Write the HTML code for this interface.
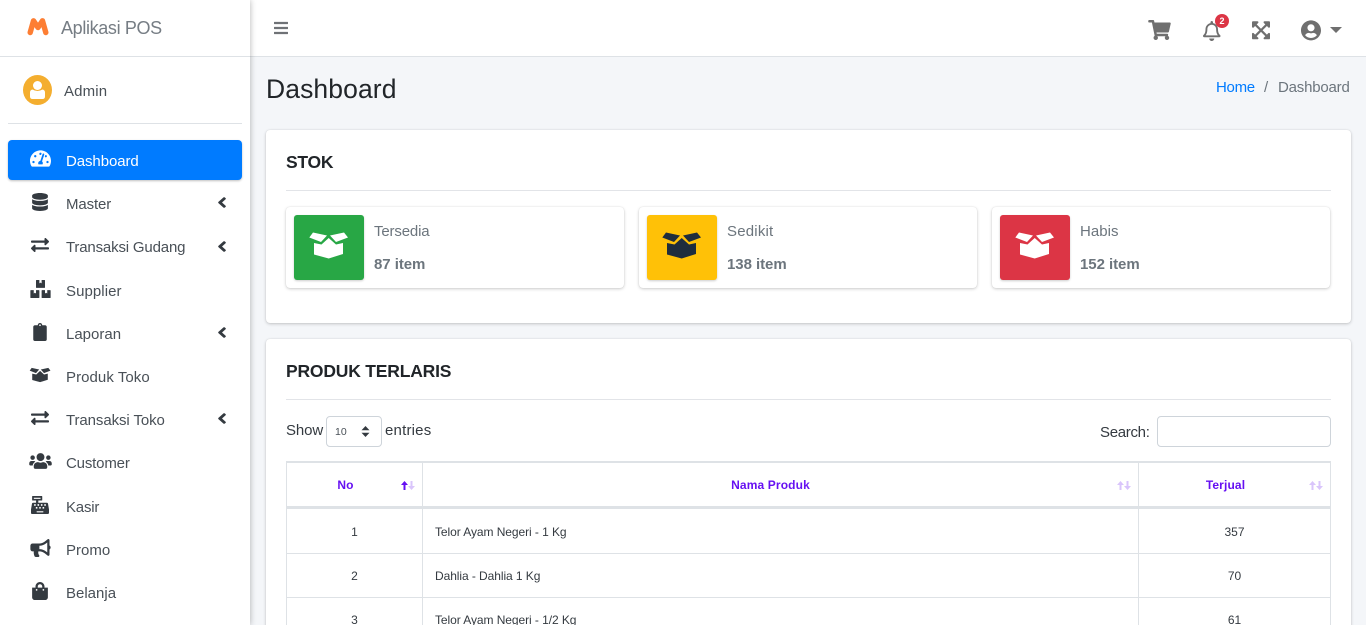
<!DOCTYPE html>
<html lang="id">
<head>
<meta charset="utf-8">
<title>Aplikasi POS</title>
<style>
*{box-sizing:border-box}
html,body{margin:0;padding:0;width:1366px;height:625px;overflow:hidden;background:#f4f6f9;font-family:"Liberation Sans",sans-serif;color:#212529}
#root{position:relative;width:1366px;height:625px;overflow:hidden;background:#f4f6f9}
.a{position:absolute}
.t{position:absolute;white-space:nowrap;line-height:20px;height:20px}
svg{position:absolute;display:block;fill:currentColor}
#side{left:0;top:0;width:250px;height:625px;background:#fff;box-shadow:0 0 6px rgba(0,0,0,.3);z-index:3}
#nav{left:250px;top:0;width:1116px;height:57px;background:#fff;border-bottom:1px solid #dee2e6}
.m{font-size:15px;color:#495057;left:66px}
.ic{color:#343a40}
.card{left:266px;width:1085px;background:#fff;border-radius:4px;box-shadow:0 0 1px rgba(0,0,0,.125),0 1px 3px rgba(0,0,0,.2)}
.h{font-size:17.5px;font-weight:700;color:#212529;left:286px}
.hr{height:1px;background:#e2e4e8}
.box{top:207px;width:338px;height:80.5px;background:#fff;border-radius:4px;box-shadow:0 0 1px rgba(0,0,0,.125),0 1px 3px rgba(0,0,0,.2)}
.bi{top:215px;width:70px;height:64.5px;border-radius:3px;box-shadow:0 1px 2px rgba(0,0,0,.2)}
.l1{font-size:15px;color:#6c757d;top:222px}
.l2{font-size:15px;font-weight:700;color:#6c757d;top:255px;letter-spacing:-.05px}
table{position:absolute;left:286px;top:461px;width:1045px;border-collapse:separate;border-spacing:0;table-layout:fixed;font-size:12px;color:#343a40;letter-spacing:-.07px}
th{height:48px;border-right:1px solid #dee2e6;border-top:2px solid #dee2e6;border-bottom:3px solid #dee2e6;color:#6610f2;font-size:12px;font-weight:700;text-align:center;letter-spacing:.13px;padding:1px 0 0}
td{border-right:1px solid #dee2e6;border-bottom:1px solid #dee2e6;padding:1px 12px 0;vertical-align:middle}
th:first-child,td:first-child{border-left:1px solid #dee2e6}
.c{text-align:center;letter-spacing:0}
.inp{background:#fff;border:1px solid #ced4da;border-radius:4px}
</style>
</head>
<body>
<div id="root">

<div id="nav" class="a"></div>

<div class="a card" style="top:130px;height:193px"></div>
<div class="a card" style="top:339px;height:300px"></div>

<!-- Navbar icons -->
<svg style="left:274px;top:20px;color:#6f7276" width="14" height="16" viewBox="0 0 448 512"><path d="M16 132h416c8.837 0 16-7.163 16-16V76c0-8.837-7.163-16-16-16H16C7.163 60 0 67.163 0 76v40c0 8.837 7.163 16 16 16zm0 160h416c8.837 0 16-7.163 16-16v-40c0-8.837-7.163-16-16-16H16c-8.837 0-16 7.163-16 16v40c0 8.837 7.163 16 16 16zm0 160h416c8.837 0 16-7.163 16-16v-40c0-8.837-7.163-16-16-16H16c-8.837 0-16 7.163-16 16v40c0 8.837 7.163 16 16 16z"/></svg>
<svg style="left:1148px;top:20px;color:#6f6f6f" width="23" height="20" viewBox="0 0 576 512"><path d="M528.12 301.319l47.273-208C578.806 78.301 567.391 64 551.99 64H159.208l-9.166-44.81C147.758 8.021 137.93 0 126.529 0H24C10.745 0 0 10.745 0 24v16c0 13.255 10.745 24 24 24h69.883l70.248 343.435C147.325 417.1 136 435.222 136 456c0 30.928 25.072 56 56 56s56-25.072 56-56c0-15.674-6.447-29.835-16.824-40h209.647C430.447 426.165 424 440.326 424 456c0 30.928 25.072 56 56 56s56-25.072 56-56c0-22.172-12.888-41.332-31.579-50.405l5.517-24.276c3.413-15.018-8.002-29.319-23.403-29.319H218.117l-6.545-32h293.145c11.206 0 20.92-7.754 23.403-18.681z"/></svg>
<svg style="left:1203px;top:21px;color:#6f6f6f" width="17.5" height="20" viewBox="0 0 448 512"><path d="M439.39 362.29c-19.32-20.76-55.47-51.99-55.47-154.29 0-77.7-54.48-139.9-127.94-155.16V32c0-17.67-14.32-32-31.98-32s-31.98 14.33-31.98 32v20.84C118.56 68.1 64.08 130.3 64.08 208c0 102.3-36.15 133.53-55.47 154.29-6 6.45-8.66 14.16-8.61 21.71.11 16.4 12.98 32 32.1 32h383.8c19.12 0 32-15.6 32.1-32 .05-7.55-2.61-15.27-8.61-21.71zM67.53 368c21.22-27.97 44.42-74.33 44.53-159.42 0-.2-.06-.38-.06-.58 0-61.86 50.14-112 112-112s112 50.14 112 112c0 .2-.06.38-.06.58.11 85.1 23.31 131.46 44.53 159.42H67.53zM224 512c35.32 0 63.97-28.65 63.97-64H160.03c0 35.35 28.65 64 63.97 64z"/></svg>
<div class="a" style="left:1215px;top:14px;width:14px;height:14px;border-radius:50%;background:#dc3545;color:#fff;font-size:9px;font-weight:700;line-height:14px;text-align:center">2</div>
<svg style="left:1252px;top:20px;color:#6f6f6f" width="18" height="20.6" viewBox="0 0 448 512"><path d="M448 344v112a23.94 23.94 0 0 1-24 24H312c-21.39 0-32.09-25.9-17-41l36.2-36.2L224 295.6 116.77 402.9 153 439c15.09 15.1 4.39 41-17 41H24a23.94 23.94 0 0 1-24-24V344c0-21.4 25.89-32.1 41-17l36.19 36.2L184.46 256 77.18 148.7 41 185c-15.1 15.1-41 4.4-41-17V56a23.94 23.94 0 0 1 24-24h112c21.39 0 32.09 25.9 17 41l-36.2 36.2L224 216.4l107.23-107.3L295 73c-15.09-15.1-4.39-41 17-41h112a23.94 23.94 0 0 1 24 24v112c0 21.4-25.89 32.1-41 17l-36.19-36.2L263.54 256l107.28 107.3L407 327.1c15.1-15.2 41-4.5 41 16.9z"/></svg>
<svg style="left:1301px;top:20px;color:#6f6f6f" width="20" height="20.65" viewBox="0 0 496 512"><path d="M248 8C111 8 0 119 0 256s111 248 248 248 248-111 248-248S385 8 248 8zm0 96c48.6 0 88 39.4 88 88s-39.4 88-88 88-88-39.4-88-88 39.4-88 88-88zm0 344c-58.7 0-111.3-26.6-146.5-68.2 18.8-35.4 55.6-59.8 98.5-59.8 2.4 0 4.8.4 7.1 1.1 13 4.2 26.6 6.9 40.9 6.9 14.3 0 28-2.7 40.9-6.9 2.3-.7 4.7-1.1 7.1-1.1 42.9 0 79.7 24.4 98.5 59.8C359.3 421.4 306.7 448 248 448z"/></svg>
<svg style="left:1330px;top:27px;color:#6f6f6f" width="12" height="6" viewBox="0 0 12 6"><path d="M0 0h12L6 6z"/></svg>

<!-- Header -->
<div class="t" style="left:266px;top:79px;font-size:26.5px;color:#212529;letter-spacing:.1px">Dashboard</div>
<div class="t" style="left:1216px;top:78px;font-size:15px;color:#007bff;letter-spacing:-.3px">Home</div>
<div class="t" style="left:1264px;top:78px;font-size:15px;color:#6c757d">/</div>
<div class="t" style="left:1278px;top:78px;font-size:15px;color:#6c757d;letter-spacing:-.2px">Dashboard</div>

<!-- STOK -->
<div class="t h" style="top:152px;letter-spacing:-.25px">STOK</div>
<div class="a hr" style="left:286px;top:190px;width:1045px"></div>

<div class="a box" style="left:286px"></div>
<div class="a bi" style="left:294px;background:#28a745"></div>
<svg style="left:304px;top:226px;color:#fff" width="50" height="40" viewBox="0 0 50 40"><path d="M5.300 11.500L9 6.500 23 9.500 17 16zM44 11.500L40 6.500 26 9.500 32 16zM10 17l7.500 1.500L24.700 12 32 18.500 39 17V28L24.700 32.500 10 28.500z"/></svg>
<div class="t l1" style="left:374px;letter-spacing:-.15px">Tersedia</div>
<div class="t l2" style="left:374px">87 item</div>

<div class="a box" style="left:639px"></div>
<div class="a bi" style="left:647px;background:#ffc107"></div>
<svg style="left:657px;top:226px;color:#1f2d3d" width="50" height="40" viewBox="0 0 50 40"><path d="M5.300 11.500L9 6.500 23 9.500 17 16zM44 11.500L40 6.500 26 9.500 32 16zM10 17l7.500 1.500L24.700 12 32 18.500 39 17V28L24.700 32.500 10 28.500z"/></svg>
<div class="t l1" style="left:727px;letter-spacing:.2px">Sedikit</div>
<div class="t l2" style="left:727px">138 item</div>

<div class="a box" style="left:992px"></div>
<div class="a bi" style="left:1000px;background:#dc3545"></div>
<svg style="left:1010px;top:226px;color:#fff" width="50" height="40" viewBox="0 0 50 40"><path d="M5.300 11.500L9 6.500 23 9.500 17 16zM44 11.500L40 6.500 26 9.500 32 16zM10 17l7.500 1.500L24.700 12 32 18.500 39 17V28L24.700 32.500 10 28.500z"/></svg>
<div class="t l1" style="left:1080px;letter-spacing:.05px">Habis</div>
<div class="t l2" style="left:1080px">152 item</div>

<!-- PRODUK TERLARIS -->
<div class="t h" style="top:361px;letter-spacing:-.2px">PRODUK TERLARIS</div>
<div class="a hr" style="left:286px;top:399px;width:1045px"></div>

<div class="t" style="left:286px;top:421px;font-size:15px;letter-spacing:-.1px;color:#343a40">Show</div>
<div class="a inp" style="left:326px;top:416px;width:56px;height:31px"></div>
<div class="t" style="left:335px;top:422px;font-size:10.5px;color:#495057">10</div>
<svg style="left:361px;top:426px;color:#343a40" width="9" height="11" viewBox="0 0 9 11"><path d="M4.500 0L8.500 4.200H.5zM4.500 11L.5 6.800h8z"/></svg>
<div class="t" style="left:385px;top:421px;font-size:15px;letter-spacing:.2px;color:#343a40">entries</div>
<div class="t" style="left:1100px;top:423px;font-size:15px;letter-spacing:-.3px;color:#343a40">Search:</div>
<div class="a inp" style="left:1157px;top:416px;width:174px;height:31px"></div>

<table>
<colgroup><col style="width:137px"><col style="width:716px"><col style="width:192px"></colgroup>
<thead><tr><th style="padding-right:18px">No</th><th style="padding-right:20px">Nama Produk</th><th style="padding-right:18px">Terjual</th></tr></thead>
<tbody>
<tr><td class="c" style="height:45px">1</td><td style="height:45px">Telor Ayam Negeri - 1 Kg</td><td class="c" style="height:45px">357</td></tr>
<tr><td class="c" style="height:44px">2</td><td style="height:44px">Dahlia - Dahlia 1 Kg</td><td class="c" style="height:44px">70</td></tr>
<tr><td class="c" style="height:44px">3</td><td style="height:44px">Telor Ayam Negeri - 1/2 Kg</td><td class="c" style="height:44px">61</td></tr>
</tbody>
</table>

<!-- Sort arrows -->
<svg style="left:401px;top:481px;color:#6610f2" width="7" height="9" viewBox="0 0 7 9"><path d="M3.500 0L7 4H4.500v5h-2V4H0z"/></svg>
<svg style="left:408px;top:481px;color:#d9c5fb" width="7" height="9" viewBox="0 0 7 9"><path d="M3.500 9L0 5h2.500V0h2v5H7z"/></svg>
<svg style="left:1117px;top:481px;color:#d9c5fb" width="7" height="9" viewBox="0 0 7 9"><path d="M3.500 0L7 4H4.500v5h-2V4H0z"/></svg>
<svg style="left:1123.5px;top:481px;color:#d9c5fb" width="7" height="9" viewBox="0 0 7 9"><path d="M3.500 9L0 5h2.500V0h2v5H7z"/></svg>
<svg style="left:1309px;top:481px;color:#d9c5fb" width="7" height="9" viewBox="0 0 7 9"><path d="M3.500 0L7 4H4.500v5h-2V4H0z"/></svg>
<svg style="left:1315.5px;top:481px;color:#d9c5fb" width="7" height="9" viewBox="0 0 7 9"><path d="M3.500 9L0 5h2.500V0h2v5H7z"/></svg>

<!-- Sidebar -->
<aside id="side" class="a">
  <svg style="left:27px;top:17px;fill:none" width="22" height="19" viewBox="0 0 22 19"><path d="M3.200 15.500L6.500 3.800 11 10.500 15.500 3.800 18.800 15.500" stroke="#fd7e33" stroke-width="5.400" stroke-linecap="round" stroke-linejoin="round" fill="none"/></svg>
  <div class="t" style="left:61px;top:18px;font-size:18px;color:#767d84;letter-spacing:-.35px">Aplikasi POS</div>
  <div class="a hr" style="left:0;top:56px;width:250px;background:#dee2e6"></div>

  <div class="a" style="left:23px;top:75px;width:29px;height:30px;border-radius:50%;background:#f4ae2f"></div>
  <svg style="left:30px;top:81px;color:#fff" width="15" height="18" viewBox="0 0 15 18"><circle cx="7.500" cy="4.500" r="4.500"/><path d="M2.500 8.500Q7.500 11.500 12.500 8.500Q15 9 15 11.500V15.500Q15 18 12.500 18H2.500Q0 18 0 15.500V11.500Q0 9 2.500 8.500z"/></svg>
  <div class="t" style="left:64px;top:82px;font-size:15px;color:#495057;letter-spacing:.15px">Admin</div>
  <div class="a hr" style="left:8px;top:123px;width:234px;background:#dee2e6"></div>

  <div class="a" style="left:8px;top:140px;width:234px;height:40px;border-radius:4px;background:#007bff;box-shadow:0 1px 2px rgba(0,0,0,.25)"></div>
  <svg style="left:30px;top:148px;color:#fff" width="21" height="21" viewBox="0 0 576 512"><path d="M288 32C128.940 32 0 160.940 0 320c0 52.800 14.250 102.260 39.060 144.800 5.610 9.620 16.300 15.200 27.440 15.200h443c11.140 0 21.830-5.580 27.440-15.200C561.750 422.260 576 372.800 576 320c0-159.060-128.940-288-288-288zm0 64c14.710 0 26.580 10.130 30.320 23.650-1.110 2.260-2.640 4.230-3.450 6.670l-9.220 27.670c-5.130 3.490-10.970 6.010-17.640 6.010-17.670 0-32-14.330-32-32S270.330 96 288 96zM96 384c-17.670 0-32-14.330-32-32s14.330-32 32-32 32 14.330 32 32-14.330 32-32 32zm48-160c-17.670 0-32-14.330-32-32s14.330-32 32-32 32 14.330 32 32-14.330 32-32 32zm246.770-72.410l-61.330 184C343.130 347.330 352 364.540 352 384c0 11.720-3.380 22.550-8.880 32H232.880c-5.500-9.450-8.880-20.280-8.880-32 0-33.940 26.500-61.430 59.900-63.590l61.340-184.010c4.170-12.560 17.730-19.450 30.360-15.170 12.570 4.190 19.350 17.790 15.170 30.360zm14.660 57.200l15.520-46.550c3.470-1.290 7.130-2.230 11.050-2.230 17.670 0 32 14.330 32 32s-14.330 32-32 32c-11.380-.010-20.890-6.280-26.570-15.220zM480 384c-17.670 0-32-14.330-32-32s14.330-32 32-32 32 14.330 32 32-14.330 32-32 32z"/></svg>
  <div class="t m" style="top:152px;color:#fff;letter-spacing:-.08px">Dashboard</div>

  <svg class="ic" style="left:32px;top:193px" width="16" height="18" viewBox="0 0 448 512"><path d="M448 73.143v45.714C448 159.143 347.667 192 224 192S0 159.143 0 118.857V73.143C0 32.857 100.333 0 224 0s224 32.857 224 73.143zM448 176v102.857C448 319.143 347.667 352 224 352S0 319.143 0 278.857V176c48.125 33.143 136.208 48.572 224 48.572S399.874 209.143 448 176zm0 160v102.857C448 479.143 347.667 512 224 512S0 479.143 0 438.857V336c48.125 33.143 136.208 48.572 224 48.572S399.874 369.143 448 336z"/></svg>
  <div class="t m" style="top:195px;letter-spacing:-.13px">Master</div>
  <svg class="ic" style="left:218px;top:197px" width="8" height="11" viewBox="20 90 215 332" preserveAspectRatio="none"><path d="M31.700 239l136-136c9.400-9.400 24.600-9.400 33.900 0l22.600 22.600c9.400 9.400 9.400 24.600 0 33.900L127.900 256l96.400 96.400c9.400 9.400 9.400 24.600 0 33.900L201.700 409c-9.400 9.400-24.600 9.400-33.900 0l-136-136c-9.500-9.400-9.500-24.600-.1-34z"/></svg>

  <svg class="ic" style="left:31px;top:236px" width="18" height="18" viewBox="0 0 512 512"><path d="M0 168v-16c0-13.255 10.745-24 24-24h360V80c0-21.367 25.899-32.042 40.971-16.971l80 80c9.372 9.373 9.372 24.569 0 33.941l-80 80C409.956 271.982 384 261.456 384 240v-48H24c-13.255 0-24-10.745-24-24zm488 152H128v-48c0-21.314-25.862-32.080-40.971-16.971l-80 80c-9.372 9.373-9.372 24.569 0 33.941l80 80C102.057 463.997 128 453.437 128 432v-48h360c13.255 0 24-10.745 24-24v-16c0-13.255-10.745-24-24-24z"/></svg>
  <div class="t m" style="top:238px;letter-spacing:-.17px">Transaksi Gudang</div>
  <svg class="ic" style="left:218px;top:240.500px" width="8" height="11" viewBox="20 90 215 332" preserveAspectRatio="none"><path d="M31.700 239l136-136c9.400-9.400 24.600-9.400 33.900 0l22.600 22.600c9.400 9.400 9.400 24.600 0 33.900L127.900 256l96.400 96.400c9.400 9.400 9.400 24.600 0 33.900L201.700 409c-9.400 9.400-24.600 9.400-33.900 0l-136-136c-9.500-9.400-9.500-24.600-.1-34z"/></svg>

  <svg class="ic" style="left:30px;top:280px" width="21" height="18" viewBox="0 0 576 512"><path d="M560 288h-80v96l-32-21.300-32 21.300v-96h-80c-8.800 0-16 7.200-16 16v192c0 8.800 7.200 16 16 16h224c8.800 0 16-7.200 16-16V304c0-8.800-7.200-16-16-16zm-384-64h224c8.800 0 16-7.200 16-16V16c0-8.800-7.200-16-16-16h-80v96l-32-21.300L256 96V0h-80c-8.800 0-16 7.200-16 16v192c0 8.800 7.200 16 16 16zm64 64h-80v96l-32-21.300L96 384v-96H16c-8.800 0-16 7.200-16 16v192c0 8.800 7.200 16 16 16h224c8.800 0 16-7.200 16-16V304c0-8.800-7.200-16-16-16z"/></svg>
  <div class="t m" style="top:282px;letter-spacing:.07px">Supplier</div>

  <svg class="ic" style="left:33px;top:323px" width="14" height="18" viewBox="0 0 384 512"><path d="M384 112v352c0 26.510-21.490 48-48 48H48c-26.510 0-48-21.490-48-48V112c0-26.510 21.490-48 48-48h80c0-35.290 28.710-64 64-64s64 28.710 64 64h80c26.510 0 48 21.490 48 48zM192 40c-13.255 0-24 10.745-24 24s10.745 24 24 24 24-10.745 24-24-10.745-24-24-24z"/></svg>
  <div class="t m" style="top:325px">Laporan</div>
  <svg class="ic" style="left:218px;top:326.500px" width="8" height="11" viewBox="20 90 215 332" preserveAspectRatio="none"><path d="M31.700 239l136-136c9.400-9.400 24.600-9.400 33.900 0l22.600 22.600c9.400 9.400 9.400 24.600 0 33.900L127.900 256l96.400 96.400c9.400 9.400 9.400 24.600 0 33.900L201.700 409c-9.400 9.400-24.600 9.400-33.900 0l-136-136c-9.500-9.400-9.500-24.600-.1-34z"/></svg>

  <svg class="ic" style="left:29px;top:367px" width="22" height="16" viewBox="4 5 41 29" preserveAspectRatio="none"><path d="M5.300 11.500L9 6.500 23 9.500 17 16zM44 11.500L40 6.500 26 9.500 32 16zM10 17l7.500 1.500L24.700 12 32 18.500 39 17V28L24.700 32.500 10 28.500z"/></svg>
  <div class="t m" style="top:368px;letter-spacing:.06px">Produk Toko</div>

  <svg class="ic" style="left:31px;top:409px" width="18" height="18" viewBox="0 0 512 512"><path d="M0 168v-16c0-13.255 10.745-24 24-24h360V80c0-21.367 25.899-32.042 40.971-16.971l80 80c9.372 9.373 9.372 24.569 0 33.941l-80 80C409.956 271.982 384 261.456 384 240v-48H24c-13.255 0-24-10.745-24-24zm488 152H128v-48c0-21.314-25.862-32.080-40.971-16.971l-80 80c-9.372 9.373-9.372 24.569 0 33.941l80 80C102.057 463.997 128 453.437 128 432v-48h360c13.255 0 24-10.745 24-24v-16c0-13.255-10.745-24-24-24z"/></svg>
  <div class="t m" style="top:411px;letter-spacing:-.09px">Transaksi Toko</div>
  <svg class="ic" style="left:218px;top:412.500px" width="8" height="11" viewBox="20 90 215 332" preserveAspectRatio="none"><path d="M31.700 239l136-136c9.400-9.400 24.600-9.400 33.900 0l22.600 22.600c9.400 9.400 9.400 24.600 0 33.900L127.900 256l96.400 96.400c9.400 9.400 9.400 24.600 0 33.900L201.700 409c-9.400 9.400-24.600 9.400-33.900 0l-136-136c-9.500-9.400-9.500-24.600-.1-34z"/></svg>

  <svg class="ic" style="left:29px;top:452px" width="23" height="18" viewBox="0 0 640 512"><path d="M96 224c35.300 0 64-28.700 64-64s-28.700-64-64-64-64 28.700-64 64 28.700 64 64 64zm448 0c35.300 0 64-28.700 64-64s-28.700-64-64-64-64 28.700-64 64 28.700 64 64 64zm32 32h-64c-17.600 0-33.500 7.100-45.100 18.600 40.300 22.100 68.900 62 75.100 109.400h66c17.700 0 32-14.300 32-32v-32c0-35.300-28.700-64-64-64zm-256 0c61.900 0 112-50.100 112-112S381.900 32 320 32 208 82.100 208 144s50.100 112 112 112zm76.800 32h-8.300c-20.800 10-43.900 16-68.500 16s-47.600-6-68.500-16h-8.300C179.600 288 128 339.600 128 403.200V432c0 26.500 21.500 48 48 48h288c26.500 0 48-21.500 48-48v-28.800c0-63.600-51.600-115.200-115.200-115.200zm-223.700-13.400C161.500 263.100 145.600 256 128 256H64c-35.300 0-64 28.700-64 64v32c0 17.700 14.300 32 32 32h65.900c6.300-47.400 34.900-87.300 75.200-109.400z"/></svg>
  <div class="t m" style="top:454px;letter-spacing:-.17px">Customer</div>

  <svg class="ic" style="left:31px;top:496px" width="18" height="18" viewBox="0 0 512 512"><path d="M511.100 378.800l-26.700-160c-2.600-15.400-15.900-26.700-31.600-26.700H208v-64h96c8.800 0 16-7.200 16-16V16c0-8.800-7.200-16-16-16H48c-8.800 0-16 7.200-16 16v96c0 8.800 7.200 16 16 16h96v64H59.100c-15.600 0-29 11.300-31.600 26.700L.8 378.700c-.6 3.500-.9 7-.9 10.500V480c0 17.700 14.300 32 32 32h448c17.700 0 32-14.300 32-32v-90.700c.1-3.500-.2-7-.8-10.500zM280 248c0-8.800 7.200-16 16-16h16c8.800 0 16 7.200 16 16v16c0 8.800-7.200 16-16 16h-16c-8.800 0-16-7.200-16-16v-16zm-32 64h16c8.800 0 16 7.200 16 16v16c0 8.800-7.200 16-16 16h-16c-8.800 0-16-7.200-16-16v-16c0-8.800 7.200-16 16-16zm-32-80c8.800 0 16 7.200 16 16v16c0 8.800-7.200 16-16 16h-16c-8.800 0-16-7.200-16-16v-16c0-8.800 7.200-16 16-16h16zM80 80V48h192v32H80zm40 200h-16c-8.800 0-16-7.200-16-16v-16c0-8.800 7.200-16 16-16h16c8.800 0 16 7.200 16 16v16c0 8.800-7.200 16-16 16zm16 64v-16c0-8.800 7.200-16 16-16h16c8.800 0 16 7.200 16 16v16c0 8.800-7.200 16-16 16h-16c-8.800 0-16-7.200-16-16zm216 112c0 4.400-3.600 8-8 8H168c-4.400 0-8-3.600-8-8v-16c0-4.400 3.600-8 8-8h176c4.400 0 8 3.600 8 8v16zm24-112c0 8.800-7.200 16-16 16h-16c-8.800 0-16-7.200-16-16v-16c0-8.800 7.200-16 16-16h16c8.800 0 16 7.200 16 16v16zm48-80c0 8.800-7.200 16-16 16h-16c-8.800 0-16-7.200-16-16v-16c0-8.800 7.200-16 16-16h16c8.800 0 16 7.200 16 16v16z"/></svg>
  <div class="t m" style="top:498px;letter-spacing:-.2px">Kasir</div>

  <svg class="ic" style="left:30px;top:539px" width="21" height="18" viewBox="0 0 576 512"><path d="M576 240c0-23.630-12.950-44.040-32-55.120V32.010C544 23.260 537.020 0 512 0c-7.120 0-14.190 2.380-19.980 7.020l-85.030 68.030C364.280 109.190 310.660 128 256 128H64c-35.350 0-64 28.650-64 64v96c0 35.350 28.650 64 64 64h33.700c-1.390 10.480-2.180 21.140-2.180 32 0 39.770 9.260 77.350 25.560 110.940 5.190 10.690 16.520 17.060 28.400 17.060h74.280c26.050 0 41.690-29.840 25.900-50.560-16.400-21.520-26.150-48.360-26.150-77.440 0-11.110 1.620-21.790 4.410-32H256c54.660 0 108.280 18.810 150.980 52.950l85.030 68.030a32.023 32.023 0 0 0 19.980 7.020c24.920 0 32-22.780 32-32V295.130C563.050 284.040 576 263.630 576 240zm-96 141.420l-33.050-26.440C392.950 311.780 325.120 288 256 288v-96c69.120 0 136.950-23.780 190.950-66.980L480 98.580v282.840z"/></svg>
  <div class="t m" style="top:541px">Promo</div>

  <svg class="ic" style="left:32px;top:582px" width="16" height="18" viewBox="0 0 448 512"><path d="M352 160v-32C352 57.420 294.579 0 224 0 153.420 0 96 57.420 96 128v32H0v272c0 44.183 35.817 80 80 80h288c44.183 0 80-35.817 80-80V160h-96zm-192-32c0-35.290 28.710-64 64-64s64 28.710 64 64v32H160v-32zm160 120c-13.255 0-24-10.745-24-24s10.745-24 24-24 24 10.745 24 24-10.745 24-24 24zm-192 0c-13.255 0-24-10.745-24-24s10.745-24 24-24 24 10.745 24 24-10.745 24-24 24z"/></svg>
  <div class="t m" style="top:584px">Belanja</div>
</aside>

</div>
</body>
</html>
